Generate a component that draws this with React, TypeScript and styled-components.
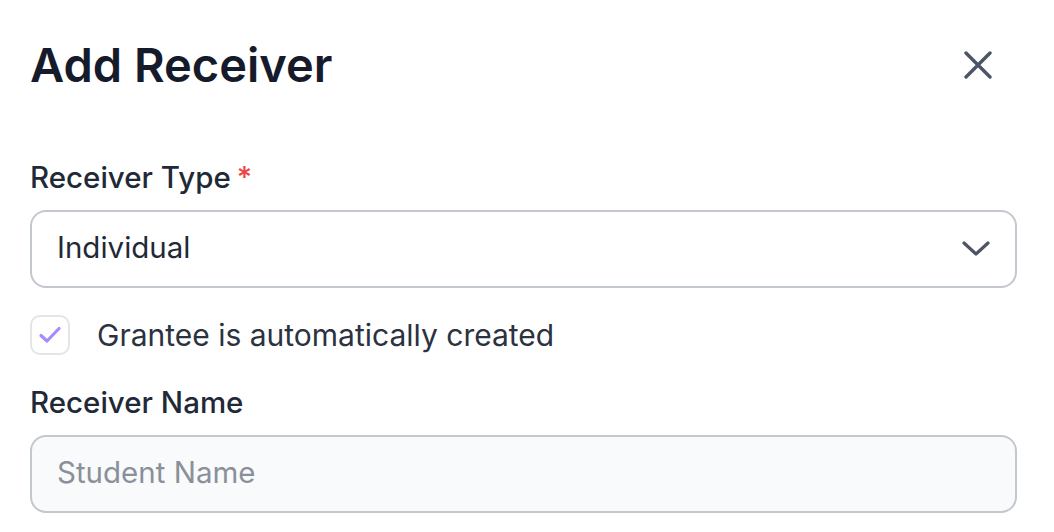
import styled, { createGlobalStyle } from "styled-components"

const GlobalStyle = createGlobalStyle`
  html, body {
    margin: 0;
    padding: 0;
    background: #ffffff;
  }
  body {
    font-family: Inter, "Noto Sans", "Liberation Sans", sans-serif;
    -webkit-font-smoothing: antialiased;
  }
`

const Panel = styled.div`
  width: 1054px;
  box-sizing: border-box;
  padding: 39px 37px 0 30px;
  display: flex;
  flex-direction: column;
`

const Header = styled.div`
  display: flex;
  align-items: center;
  justify-content: space-between;
  height: 52px;
`

const Title = styled.h2`
  margin: 0;
  font-size: 47px;
  line-height: 52px;
  font-weight: 600;
  color: #161b2b;
`

const CloseButton = styled.button`
  border: none;
  background: none;
  padding: 0;
  margin-right: 25px;
  width: 28px;
  height: 28px;
  display: flex;
  align-items: center;
  justify-content: center;
  cursor: pointer;
  color: #4b5563;
`

const Label = styled.label<{ $top: number }>`
  display: flex;
  align-items: flex-start;
  margin-top: ${p => p.$top}px;
  font-size: 29.5px;
  line-height: 36px;
  font-weight: 500;
  color: #1f2937;
`

const Required = styled.span`
  color: #ef4444;
  margin-left: 6px;
`

const Field = styled.div<{ $muted?: boolean }>`
  margin-top: 15px;
  height: 78px;
  box-sizing: border-box;
  border: 2px solid #c3c7ce;
  border-radius: 16px;
  background: ${p => (p.$muted ? "#f9fafb" : "#ffffff")};
  display: flex;
  align-items: center;
  justify-content: space-between;
  padding: 0 25px 5px 25px;
`

const FieldText = styled.span<{ $placeholder?: boolean }>`
  font-size: 29.5px;
  color: ${p => (p.$placeholder ? "#8a9099" : "#1f2937")};
`

const Chevron = styled.svg`
  margin-top: 4px;
`

const CheckRow = styled.div`
  margin-top: 27px;
  display: flex;
  align-items: center;
  gap: 27px;
  height: 40px;
`

const CheckBox = styled.span`
  width: 40px;
  height: 40px;
  box-sizing: border-box;
  border: 2px solid #e3e5ea;
  border-radius: 10px;
  display: flex;
  align-items: center;
  justify-content: center;
`

const CheckText = styled.span`
  font-size: 30px;
  line-height: 40px;
  color: #2b3240;
`

export default function App() {
  return (
    <>
      <GlobalStyle />
      <Panel>
        <Header>
          <Title>Add Receiver</Title>
          <CloseButton aria-label="Close">
            <svg width="28" height="28" viewBox="0 0 28 28" fill="none">
              <path d="M2 2L26 26M26 2L2 26" stroke="currentColor" strokeWidth="3.4" strokeLinecap="round" />
            </svg>
          </CloseButton>
        </Header>

        <Label $top={68}>
          Receiver Type<Required>*</Required>
        </Label>
        <Field>
          <FieldText>Individual</FieldText>
          <Chevron width="28" height="16" viewBox="0 0 28 16" fill="none">
            <path d="M2 2L14 13L26 2" stroke="#4b5563" strokeWidth="3.2" strokeLinecap="round" strokeLinejoin="round" />
          </Chevron>
        </Field>

        <CheckRow>
          <CheckBox>
            <svg width="24" height="20" viewBox="0 0 24 20" fill="none">
              <path d="M3 10.5L9 16L21 3.5" stroke="#a78bfa" strokeWidth="3.2" strokeLinecap="round" strokeLinejoin="round" />
            </svg>
          </CheckBox>
          <CheckText>Grantee is automatically created</CheckText>
        </CheckRow>

        <Label $top={29}>Receiver Name</Label>
        <Field $muted>
          <FieldText $placeholder>Student Name</FieldText>
        </Field>
      </Panel>
    </>
  )
}
